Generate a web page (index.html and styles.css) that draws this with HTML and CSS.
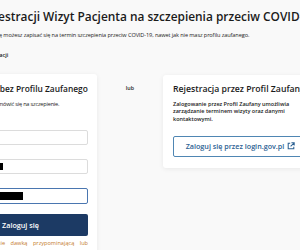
FILE: index.html
```html
<!DOCTYPE html>
<html lang="pl">
<head>
<meta charset="utf-8">
<title>e-Rejestracja</title>
<link rel="stylesheet" href="styles.css">
</head>
<body>
<main class="page">
  <h1 class="title">System e-Rejestracji Wizyt Pacjenta na szczepienia przeciw COVID-19</h1>
  <p class="lead">Przez e-Rejestrację możesz zapisać się na termin szczepienia przeciw COVID-19, nawet jak nie masz profilu zaufanego.</p>
  <p class="crumb">Zasady rejestracji</p>

  <div class="row">
    <section class="card card-left">
      <h2 class="card-title">Rejestracja bez Profilu Zaufanego</h2>
      <p class="card-text">Podaj dane, aby zamówić się na szczepienie.</p>
      <div class="field field-first">
        <label class="label">PESEL</label>
        <div class="input"></div>
      </div>
      <div class="field">
        <label class="label">Telefon</label>
        <div class="input"><span class="redact redact-short"></span></div>
      </div>
      <div class="field">
        <label class="label">Kod SMS</label>
        <div class="input input-focus"><span class="redact redact-long"></span></div>
      </div>
      <button class="btn-primary" type="button">Zaloguj się</button>
      <p class="note">Umów szczepienie dawką przypominającą lub dodatkową.</p>
    </section>

    <div class="divider">lub</div>

    <section class="card card-right">
      <h2 class="card-title">Rejestracja przez Profil Zaufany</h2>
      <p class="card-desc">Zalogowanie przez Profil Zaufany umożliwia zarządzanie terminem wizyty oraz danymi kontaktowymi.</p>
      <button class="btn-outline" type="button">Zaloguj się przez login.gov.pl
        <svg class="ext" viewBox="0 0 10 10" width="8" height="8" aria-hidden="true">
          <path d="M4 1.5H1.5v7h7V6" fill="none" stroke="currentColor" stroke-width="1.3"/>
          <path d="M5.5 1h3.5v3.5M9 1L4.5 5.5" fill="none" stroke="currentColor" stroke-width="1.3"/>
        </svg>
      </button>
    </section>
  </div>
</main>
</body>
</html>
```

FILE: styles.css
```css
html, body {
  margin: 0;
  padding: 0;
}
body {
  width: 300px;
  height: 250px;
  overflow: hidden;
  background: #f9f9f9;
  font-family: "Open Sans", "Noto Sans", sans-serif;
  color: #1b1b1b;
}
.page {
  margin-left: -57px;
  width: 374px;
}
.title {
  margin: 0 0 0 -18px;
  padding-top: 8px;
  font-size: 11.9px;
  line-height: 17px;
  font-weight: 600;
  white-space: nowrap;
}
.lead {
  margin: 6px 0 0 12px;
  font-size: 5.6px;
  letter-spacing: -0.1px;
  line-height: 8px;
  white-space: nowrap;
}
.crumb {
  margin: 12px 0 0 18px;
  font-size: 5.6px;
  line-height: 8px;
  font-weight: 600;
  white-space: nowrap;
}
.row {
  display: flex;
  align-items: flex-start;
  margin-top: 15px;
}
.card {
  flex: 0 0 154px;
  width: 154px;
  min-width: 0;
  box-sizing: border-box;
  background: #fff;
  border-radius: 3px;
  box-shadow: 0 1px 5px rgba(0, 0, 0, 0.07);
  padding: 9px 9px 11px 10px;
}
.card-right {
  margin-top: 1px;
  padding-top: 8px;
}
.card-title {
  margin: 0;
  font-size: 8.4px;
  line-height: 12px;
  font-weight: 600;
  white-space: nowrap;
}
.card-right .card-title {
  font-size: 8.7px;
}
.card-text {
  margin: 5px 0 0;
  font-size: 5.6px;
  letter-spacing: -0.2px;
  line-height: 8px;
  white-space: nowrap;
}
.field-first {
  margin-top: 8px;
}
.label {
  display: block;
  font-size: 5.6px;
  line-height: 8px;
  margin-bottom: 6px;
}
.input {
  box-sizing: border-box;
  height: 15px;
  border: 1px solid #dcdcdc;
  border-radius: 2px;
  background: #fff;
  display: flex;
  align-items: center;
  padding-left: 5px;
}
.input-focus {
  border-color: #4a76b0;
  height: 16px;
}
.redact {
  display: block;
  height: 8px;
  background: #000;
}
.redact-short {
  width: 44px;
  height: 7px;
}
.redact-long {
  width: 64px;
}
.btn-primary {
  display: block;
  width: 100%;
  margin-top: 10px;
  height: 22px;
  border: 0;
  border-radius: 2px;
  background: #1c3a64;
  color: #fff;
  font-family: inherit;
  font-size: 7.2px;
  font-weight: 600;
  padding: 0;
}
.note {
  margin: 3px 0 0;
  font-size: 5.6px;
  line-height: 8px;
  color: #c47a2c;
  text-align: justify;
}
.divider {
  flex: 0 0 66px;
  text-align: center;
  font-size: 5.4px;
  font-weight: 600;
  padding-top: 10px;
  line-height: 8px;
}
.card-desc {
  margin: 5.5px 0 0;
  font-size: 5.5px;
  line-height: 7.7px;
  font-weight: 600;
  color: #222;
  width: 122px;
}
.btn-outline {
  display: flex;
  align-items: center;
  justify-content: center;
  gap: 3px;
  box-sizing: border-box;
  width: 100%;
  height: 21px;
  margin-top: 12px;
  border: 1.2px solid #4f86b3;
  border-radius: 2px;
  background: #fff;
  color: #2c6193;
  font-family: inherit;
  font-size: 7.2px;
  font-weight: 600;
  padding: 0;
}
.ext {
  flex: 0 0 auto;
}
```
